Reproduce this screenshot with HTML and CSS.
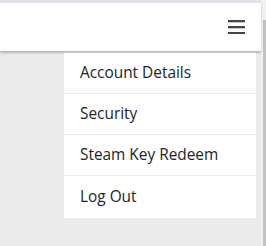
FILE: index.html
```html
<!DOCTYPE html>
<html lang="en">
<head>
    <meta charset="UTF-8">
    <meta name="viewport" content="width=device-width, initial-scale=1.0">
    <title>Account Menu</title>
    <link rel="stylesheet" href="styles.css">
</head>
<body>
    <div class="page">
        <header class="topbar">
            <button class="menu-toggle" type="button" aria-label="Menu">
                <svg width="17" height="14" viewBox="0 0 17 14">
                    <rect x="0" y="0" width="17" height="2.3" fill="#41464d"/>
                    <rect x="0" y="6" width="17" height="2.3" fill="#41464d"/>
                    <rect x="0" y="12" width="17" height="2.3" fill="#41464d"/>
                </svg>
            </button>
        </header>

        <ul class="dropdown">
            <li><a href="#">Account Details</a></li>
            <li><a href="#">Security</a></li>
            <li><a href="#">Steam Key Redeem</a></li>
            <li><a href="#" class="last">Log Out</a></li>
        </ul>
    </div>
    <div class="scrollbar"><div class="thumb"></div></div>
</body>
</html>
```

FILE: styles.css
```css
html, body {
    height: 100%;
}
body {
    margin: 0;
    display: flex;
    background-color: #ebebeb;
    font-family: "Open Sans", Arial, sans-serif;
    overflow: hidden;
}
.page {
    flex: 1;
    position: relative;
}
.topbar {
    height: 48px;
    background: white;
    border-top: 3px solid #e1e4ec;
    box-shadow: 0 2px 2px rgba(0,0,0,0.22);
    display: flex;
    justify-content: flex-end;
    align-items: center;
    padding-right: 16px;
}
.menu-toggle {
    background: none;
    border: none;
    padding: 0;
    margin-top: -1px;
    cursor: pointer;
    display: flex;
}
.dropdown {
    position: absolute;
    top: 53px;
    left: 64px;
    width: 192px;
    margin: 0;
    padding: 0;
    list-style: none;
    background: white;
}
.dropdown li {
    border-bottom: 1px solid #e8e9f1;
}
.dropdown li:last-child {
    border-bottom: none;
}
.dropdown a {
    display: block;
    height: 40px;
    line-height: 40px;
    padding-left: 16px;
    font-size: 15.4px;
    color: #212529;
    text-decoration: none;
}
.dropdown a.last {
    height: 42px;
    line-height: 42px;
}
.scrollbar {
    width: 5px;
    background: #f1f1f1;
    padding-top: 20px;
    display: flex;
    justify-content: flex-end;
}
.thumb {
    width: 3px;
    height: 100%;
    background: #c1c1c1;
}
```
